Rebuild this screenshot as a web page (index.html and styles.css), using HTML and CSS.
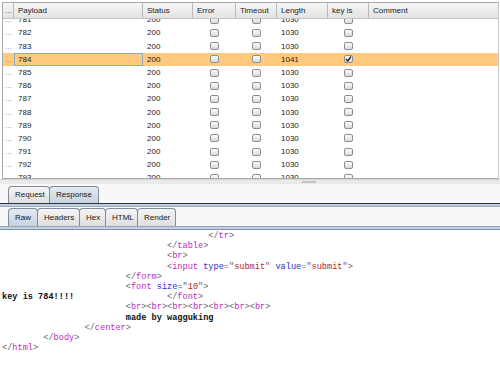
FILE: index.html
```html
<!DOCTYPE html>
<html>
<head>
<meta charset="utf-8">
<link rel="stylesheet" href="styles.css">
</head>
<body>
<div class="results">
  <div class="row head">
    <div class="c dots">...</div>
    <div class="c">Payload</div>
    <div class="c">Status</div>
    <div class="c">Error</div>
    <div class="c">Timeout</div>
    <div class="c">Length</div>
    <div class="c">key is</div>
    <div class="c last">Comment</div>
  </div>
  <div class="tbody">
    <div class="rows">
      <div class="row"><div class="c dots">...</div><div class="c">781</div><div class="c">200</div><div class="c cb"><span class="box"></span></div><div class="c cb"><span class="box"></span></div><div class="c">1030</div><div class="c cb"><span class="box"></span></div><div class="c"></div></div>
      <div class="row"><div class="c dots">...</div><div class="c">782</div><div class="c">200</div><div class="c cb"><span class="box"></span></div><div class="c cb"><span class="box"></span></div><div class="c">1030</div><div class="c cb"><span class="box"></span></div><div class="c"></div></div>
      <div class="row"><div class="c dots">...</div><div class="c">783</div><div class="c">200</div><div class="c cb"><span class="box"></span></div><div class="c cb"><span class="box"></span></div><div class="c">1030</div><div class="c cb"><span class="box"></span></div><div class="c"></div></div>
      <div class="row sel"><div class="c dots">...</div><div class="c focus">784</div><div class="c">200</div><div class="c cb"><span class="box"></span></div><div class="c cb"><span class="box"></span></div><div class="c">1041</div><div class="c cb"><span class="box checked"><svg width="7" height="6" viewBox="0 0 7 6"><path d="M1 3 L2.8 5 L6 0.5" fill="none" stroke="#222" stroke-width="1.3"/></svg></span></div><div class="c"></div></div>
      <div class="row"><div class="c dots">...</div><div class="c">785</div><div class="c">200</div><div class="c cb"><span class="box"></span></div><div class="c cb"><span class="box"></span></div><div class="c">1030</div><div class="c cb"><span class="box"></span></div><div class="c"></div></div>
      <div class="row"><div class="c dots">...</div><div class="c">786</div><div class="c">200</div><div class="c cb"><span class="box"></span></div><div class="c cb"><span class="box"></span></div><div class="c">1030</div><div class="c cb"><span class="box"></span></div><div class="c"></div></div>
      <div class="row"><div class="c dots">...</div><div class="c">787</div><div class="c">200</div><div class="c cb"><span class="box"></span></div><div class="c cb"><span class="box"></span></div><div class="c">1030</div><div class="c cb"><span class="box"></span></div><div class="c"></div></div>
      <div class="row"><div class="c dots">...</div><div class="c">788</div><div class="c">200</div><div class="c cb"><span class="box"></span></div><div class="c cb"><span class="box"></span></div><div class="c">1030</div><div class="c cb"><span class="box"></span></div><div class="c"></div></div>
      <div class="row"><div class="c dots">...</div><div class="c">789</div><div class="c">200</div><div class="c cb"><span class="box"></span></div><div class="c cb"><span class="box"></span></div><div class="c">1030</div><div class="c cb"><span class="box"></span></div><div class="c"></div></div>
      <div class="row"><div class="c dots">...</div><div class="c">790</div><div class="c">200</div><div class="c cb"><span class="box"></span></div><div class="c cb"><span class="box"></span></div><div class="c">1030</div><div class="c cb"><span class="box"></span></div><div class="c"></div></div>
      <div class="row"><div class="c dots">...</div><div class="c">791</div><div class="c">200</div><div class="c cb"><span class="box"></span></div><div class="c cb"><span class="box"></span></div><div class="c">1030</div><div class="c cb"><span class="box"></span></div><div class="c"></div></div>
      <div class="row"><div class="c dots">...</div><div class="c">792</div><div class="c">200</div><div class="c cb"><span class="box"></span></div><div class="c cb"><span class="box"></span></div><div class="c">1030</div><div class="c cb"><span class="box"></span></div><div class="c"></div></div>
      <div class="row"><div class="c dots">...</div><div class="c">793</div><div class="c">200</div><div class="c cb"><span class="box"></span></div><div class="c cb"><span class="box"></span></div><div class="c">1030</div><div class="c cb"><span class="box"></span></div><div class="c"></div></div>
    </div>
  </div>
</div>
<div class="splitter"><span class="grip"></span></div>
<div class="tabs tabs1">
  <div class="tab">Request</div>
  <div class="tab active">Response</div>
</div>
<div class="bar bar1"></div>
<div class="tabs tabs2">
  <div class="tab">Raw</div>
  <div class="tab">Headers</div>
  <div class="tab">Hex</div>
  <div class="tab">HTML</div>
  <div class="tab">Render</div>
</div>
<div class="bar bar2"></div>
<pre class="code"><span class="b">                                        &lt;/</span><span class="t">tr</span><span class="b">&gt;</span>
<span class="b">                                &lt;/</span><span class="t">table</span><span class="b">&gt;</span>
<span class="b">                                &lt;</span><span class="t">br</span><span class="b">&gt;</span>
<span class="b">                                &lt;</span><span class="t">input</span> <span class="a">type</span><span class="b">="</span><span class="v">submit</span><span class="b">"</span> <span class="a">value</span><span class="b">="</span><span class="v">submit</span><span class="b">"&gt;</span>
<span class="b">                        &lt;/</span><span class="t">form</span><span class="b">&gt;</span>
<span class="b">                        &lt;</span><span class="t">font</span> <span class="a">size</span><span class="b">="</span><span class="v">10</span><span class="b">"&gt;</span>
<span class="x">key is 784!!!!</span><span class="b">                  &lt;/</span><span class="t">font</span><span class="b">&gt;</span>
<span class="b">                        &lt;</span><span class="t">br</span><span class="b">&gt;&lt;</span><span class="t">br</span><span class="b">&gt;&lt;</span><span class="t">br</span><span class="b">&gt;&lt;</span><span class="t">br</span><span class="b">&gt;&lt;</span><span class="t">br</span><span class="b">&gt;&lt;</span><span class="t">br</span><span class="b">&gt;&lt;</span><span class="t">br</span><span class="b">&gt;</span>
                        <span class="x">made by wagguking</span>
<span class="b">                &lt;/</span><span class="t">center</span><span class="b">&gt;</span>
<span class="b">        &lt;/</span><span class="t">body</span><span class="b">&gt;</span>
<span class="b">&lt;/</span><span class="t">html</span><span class="b">&gt;</span></pre>
</body>
</html>
```
FILE: styles.css
```css
html, body {
  margin: 0;
  padding: 0;
  background: #ffffff;
  width: 500px;
  height: 366px;
  overflow: hidden;
  font-family: "Liberation Sans", Arial, sans-serif;
  font-size: 8px;
  color: #1a1a1a;
}

.results {
  margin: 2px 1px 0 2px;
  border: 1px solid #a9a9a9;
  border-right: 1px solid #c8c8c8;
  background: #fff;
}

.row {
  display: grid;
  grid-template-columns: 11px 129px 50px 43px 41px 51px 41px 1fr;
  height: 13.2px;
  line-height: 13.2px;
}

.row .c {
  padding-left: 4px;
  white-space: nowrap;
  overflow: hidden;
  box-sizing: border-box;
}

.row .dots {
  padding-left: 2px;
  color: #8a8a8a;
}

.head {
  height: 16px;
  line-height: 16px;
  background: linear-gradient(#f6f6f6, #e3e3e3);
  border-bottom: 1px solid #c4c4c4;
  box-sizing: border-box;
}

.head .c {
  border-right: 1px solid #b9b9b9;
  color: #222;
}

.head .dots {
  color: #555;
}

.head .last {
  border-right: none;
}

.tbody {
  height: 159px;
  overflow: hidden;
}

.rows {
  margin-top: -5.8px;
}

.sel {
  background: #ffc97e;
}

.sel .focus {
  border: 1px solid #8fa9c2;
  line-height: 11.2px;
  padding-left: 3px;
}

.cb {
  display: flex;
  align-items: center;
  justify-content: center;
  padding-left: 0 !important;
}

.box {
  display: flex;
  align-items: center;
  justify-content: center;
  width: 9px;
  height: 8px;
  box-sizing: border-box;
  border: 1px solid #8e8e8e;
  border-radius: 2px;
  background: linear-gradient(#fdfdfd, #d9d9d9);
}

.box svg {
  display: block;
}

.splitter {
  height: 4px;
  background: #e9e9e9;
  border-top: 1px solid #d4d4d4;
  position: relative;
}

.grip {
  position: absolute;
  left: 302px;
  top: 1px;
  width: 14px;
  height: 2px;
  background: #c4c4c4;
}

.tabs {
  display: flex;
  align-items: flex-end;
  background: #f8f8f8;
  padding-left: 8px;
}

.tabs1 {
  height: 19px;
  padding-top: 0;
}

.tabs2 {
  height: 19px;
}

.tab {
  box-sizing: border-box;
  border: 1px solid #7f8c99;
  border-bottom: none;
  border-radius: 4px 4px 0 0;
  background: linear-gradient(#f5f5f5, #dedede);
  color: #1a1a1a;
  padding: 0 6px;
  margin-right: -1px;
  font-size: 8px;
}

.tabs1 .tab {
  height: 17px;
  line-height: 16px;
}

.tabs1 .tab:nth-child(1) { width: 42px; }
.tabs1 .tab:nth-child(2) { width: 50px; }

.tabs2 .tab {
  height: 18px;
  line-height: 17px;
}

.tabs2 .tab:nth-child(1) { width: 30px; }
.tabs2 .tab:nth-child(2) { width: 43px; }
.tabs2 .tab:nth-child(3) { width: 27px; }
.tabs2 .tab:nth-child(4) { width: 33px; }
.tabs2 .tab:nth-child(5) { width: 39px; }

.tab.active {
  background: linear-gradient(#e3eaf2, #c5d3e2);
}

.tabs2 .tab:first-child {
  background: linear-gradient(#e3eaf2, #c5d3e2);
}

.bar {
  box-sizing: border-box;
}

.bar1 {
  height: 4px;
  border-top: 1px solid #2e3742;
  border-bottom: 1px solid #9cacbd;
  background: #bccfe2;
}

.bar2 {
  height: 4px;
  border-top: 1px solid #9aa4ae;
  border-bottom: 1px solid #7d93aa;
  background: #bfd0e2;
}

.code {
  margin: 0;
  padding: 1px 0 0 2px;
  font-family: "Liberation Mono", "Courier New", monospace;
  font-size: 8.6px;
  line-height: 10.2px;
  color: #222;
  background: #fff;
}

.code .b { color: #666; }
.code .t { color: #c22ac2; }
.code .a { color: #2b2bc8; }
.code .v { color: #b22a2a; }
.code .x { color: #111; font-weight: bold; }
```
